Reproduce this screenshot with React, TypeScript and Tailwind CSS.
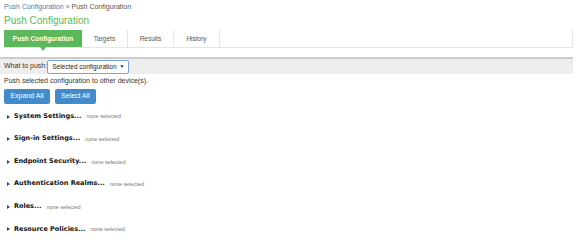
const sections = [
    'System Settings...',
    'Sign-in Settings...',
    'Endpoint Security...',
    'Authentication Realms...',
    'Roles...',
    'Resource Policies...',
];

const tabs = ['Targets', 'Results', 'History'];

const App = () => {
    return (
        <div className="w-[576px] h-[248px] bg-white overflow-hidden font-['Liberation_Sans',Arial,sans-serif] pr-[3px]">

            {/* Breadcrumb + title */}
            <div className="pl-[4px] pt-[2px] text-[7px] leading-[9px]">
                <span className="text-[#4a7cb8]">Push Configuration</span>
                <span className="text-[#555]"> &gt; Push Configuration</span>
            </div>
            <h1 className="pl-[4px] mt-[4px] text-[10px] leading-[12px] text-[#5cb85c]">Push Configuration</h1>

            {/* Tabs */}
            <div className="mt-[3px] ml-[4px] flex h-[18px] border-r border-b border-[#e6e6e6]">
                <div className="relative w-[78px] bg-[#5cb85c] text-white text-[6.5px] font-bold flex items-center justify-center">
                    Push Configuration
                    <div className="absolute left-1/2 -translate-x-1/2 top-full w-0 h-0 border-l-[3px] border-r-[3px] border-t-[4px] border-l-transparent border-r-transparent border-t-[#5cb85c]" />
                </div>
                {tabs.map((t) => (
                    <div key={t} className="w-[46px] border-r border-[#e6e6e6] text-[6.5px] text-[#555] flex items-center justify-center">
                        {t}
                    </div>
                ))}
            </div>

            {/* What to push */}
            <div className="mt-[9px] h-[17px] bg-[#eeeeee] border-t-2 border-[#cccccc] flex items-center pl-[4px]">
                <span className="text-[7px] text-[#333] whitespace-nowrap">What to push:</span>
                <div className="h-[14px] bg-white border border-[#7aa7d8] rounded-[2px] flex items-center pl-[4px] pr-[4px] gap-[3px] text-[6.5px] text-[#222] whitespace-nowrap">
                    Selected configuration
                    <span className="text-[5px]">▼</span>
                </div>
            </div>
            <p className="pl-[4px] mt-[2px] text-[7px] leading-[9px] text-[#333]">Push selected configuration to other device(s).</p>

            {/* Buttons */}
            <div className="pl-[4px] mt-[4px] flex gap-[5px]">
                <button className="h-[15px] w-[46px] bg-[#428bca] text-white text-[7px] rounded-[2px]">Expand All</button>
                <button className="h-[15px] w-[41px] bg-[#428bca] text-white text-[7px] rounded-[2px]">Select All</button>
            </div>

            {/* Sections */}
            <div className="pl-[7px] mt-[8px] flex flex-col gap-[13.6px]">
                {sections.map((s) => (
                    <div key={s} className="flex items-center h-[9px]">
                        <span className="w-0 h-0 border-t-[2.5px] border-b-[2.5px] border-l-[3px] border-t-transparent border-b-transparent border-l-[#2d4a66] mr-[4px]" />
                        <span className="font-['DejaVu_Sans',Verdana,sans-serif] font-bold text-[6.5px] text-[#111]">{s}</span>
                        <span className="ml-[5px] text-[5.5px] text-[#777]">none selected</span>
                    </div>
                ))}
            </div>
        </div>
    );
};

export default App;
